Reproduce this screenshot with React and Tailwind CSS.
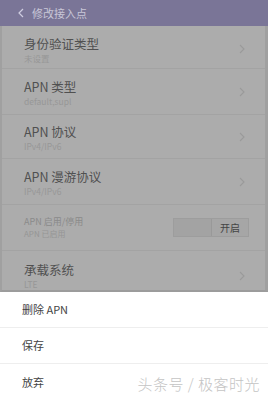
import React from "react";

const font = { fontFamily: '"Noto Sans CJK SC", "Noto Sans", sans-serif' };

function Chevron() {
  return (
    <svg width="6" height="10" viewBox="0 0 6 10" className="shrink-0">
      <path d="M1 1 L5 5 L1 9" fill="none" stroke="#9a9a9a" strokeWidth="1.1" />
    </svg>
  );
}

function Row({ title, sub, h }) {
  return (
    <div className={`flex items-center justify-between pl-[22px] pr-[20px] border-b border-[#a3a3a3] ${h}`}>
      <div className="flex flex-col pt-[1px]">
        <div className="text-[12.5px] leading-[17px] text-[#505050]">{title}</div>
        <div className="text-[8.5px] leading-[12px] text-[#979797]">{sub}</div>
      </div>
      <Chevron />
    </div>
  );
}

export default function App() {
  return (
    <div className="w-[268px] h-[400px] bg-white overflow-hidden flex flex-col" style={font}>
      <div className="h-[26px] bg-[#7a7597] flex items-center pl-[18px] gap-[8px] shrink-0">
        <svg width="6" height="10" viewBox="0 0 6 10">
          <path d="M5 1 L1 5 L5 9" fill="none" stroke="#cfcde0" strokeWidth="1.2" />
        </svg>
        <span className="text-[11px] text-[#c9c7d8]">修改接入点</span>
      </div>
      <div className="h-[266px] bg-[#acacac] border-l-[2px] border-r-[3px] border-[#a0a0a0] border-b-[2px] border-b-[#9c9c9c] flex flex-col shrink-0">
        <div className="pt-[4px]" />
        <Row title="身份验证类型" sub="未设置" h="h-[41px]" />
        <Row title="APN 类型" sub="default,supl" h="h-[48px]" />
        <Row title="APN 协议" sub="IPv4/IPv6" h="h-[46px]" />
        <Row title="APN 漫游协议" sub="IPv4/IPv6" h="h-[48px]" />
        <div className="h-[48px] flex items-center justify-between pl-[22px] pr-[16px] border-b border-[#a3a3a3]">
          <div className="flex flex-col">
            <div className="text-[9px] leading-[13px] text-[#8a8a8a]">APN 启用/停用</div>
            <div className="text-[8px] leading-[12px] text-[#959595]">APN 已启用</div>
          </div>
          <div className="w-[76px] h-[19px] flex bg-[#a3a3a3] border border-[#9d9d9d]">
            <div className="flex-1" />
            <div className="w-[37px] h-full bg-[#a6a6a6] border-l border-[#999] flex items-center justify-center text-[10px] text-[#444]">开启</div>
          </div>
        </div>
        <div className="flex-1 flex items-center justify-between pl-[22px] pr-[20px] pt-[10px]">
          <div className="flex flex-col">
            <div className="text-[12.5px] leading-[17px] text-[#505050]">承载系统</div>
            <div className="text-[8.5px] leading-[12px] text-[#979797]">LTE</div>
          </div>
          <Chevron />
        </div>
      </div>
      <div className="flex flex-col relative">
        <div className="h-[36px] flex items-center pl-[22px] text-[11px] text-[#444] border-b border-[#eeeeee]">删除 APN</div>
        <div className="h-[36px] flex items-center pl-[22px] text-[11px] text-[#444] border-b border-[#eeeeee]">保存</div>
        <div className="h-[36px] flex items-center pl-[22px] text-[11px] text-[#444]">放弃</div>
        <div className="absolute right-[8px] bottom-[5px] text-[15px] font-light text-[#c4c4c4] tracking-[0.5px]">头条号 / 极客时光</div>
      </div>
    </div>
  );
}
